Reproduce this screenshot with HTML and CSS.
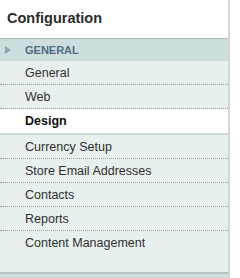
FILE: index.html
```html
<!DOCTYPE html>
<html lang="en">
<head>
  <meta charset="UTF-8" />
  <title>Configuration</title>
  <link rel="stylesheet" href="styles.css">
</head>
<body>
  <div class="side">
    <h3 class="side-title">Configuration</h3>

    <div class="group-head">
      <span class="arrow"></span>
      GENERAL
    </div>

    <ul class="tabs">
      <li>General</li>
      <li>Web</li>
      <li class="active">Design</li>
    </ul>

    <ul class="tabs tabs-last">
      <li>Currency Setup</li>
      <li>Store Email Addresses</li>
      <li>Contacts</li>
      <li>Reports</li>
      <li>Content Management</li>
    </ul>

    <div class="foot"></div>
  </div>
</body>
</html>
```

FILE: styles.css
```css
body {
  margin: 0;
  padding: 0;
  background: #fff;
  font-family: "Liberation Sans", Arial, sans-serif;
}
.side {
  width: 228px;
  border-right: 2px solid #d2d6d6;
}
.side-title {
  margin: 0;
  height: 38px;
  line-height: 37px;
  padding-left: 7px;
  font-size: 14.5px;
  font-weight: bold;
  color: #2b2b2b;
}
.group-head {
  display: flex;
  align-items: center;
  height: 22px;
  border-top: 1px solid #a9bdbd;
  background: #cddddd;
  padding-left: 5px;
  font-size: 11px;
  font-weight: bold;
  color: #4d6d84;
}
.arrow {
  width: 0;
  height: 0;
  border-top: 4px solid transparent;
  border-bottom: 4px solid transparent;
  border-left: 6px solid #8fa5ae;
  margin-right: 14px;
}
.tabs {
  list-style-type: none;
  margin: 0;
  padding: 0;
  background: #e7efef;
  border-bottom: 2px solid #cfd6d6;
}
.tabs li {
  height: 21px;
  line-height: 21px;
  padding: 2px 0 0 25px;
  font-size: 12.5px;
  color: #2f2f2f;
  border-bottom: 1px dotted #9a9a9a;
}
.tabs li:last-child {
  border-bottom: none;
  height: 22px;
}
.tabs li.active {
  background: #fff;
  font-weight: bold;
  color: #111;
}
.tabs-last {
  padding-bottom: 17px;
  border-bottom: 2px solid #b4c4c4;
}
.foot {
  height: 4px;
  background: #cfdddd;
}
```
